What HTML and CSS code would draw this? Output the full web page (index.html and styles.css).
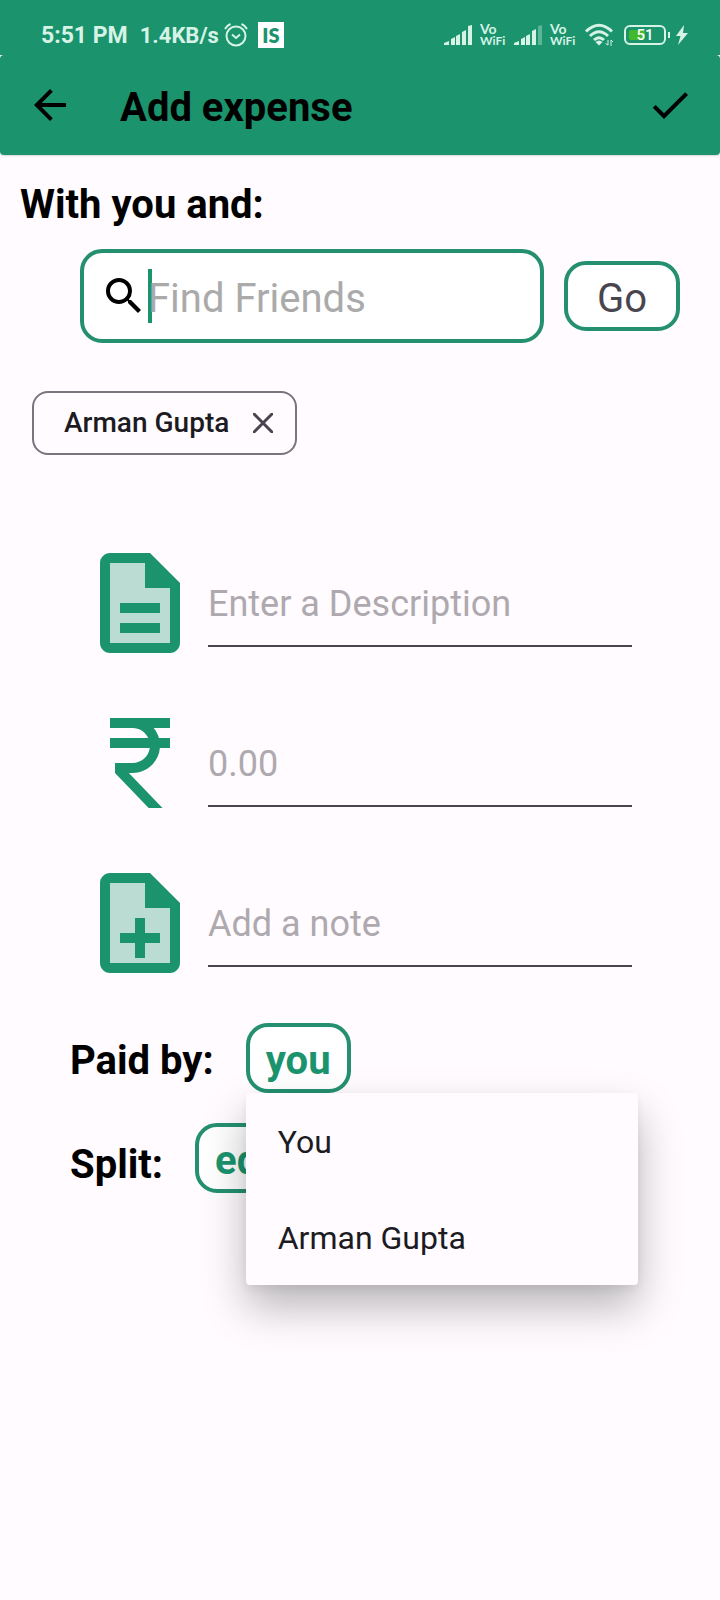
FILE: index.html
```html
<!DOCTYPE html>
<html lang="en">
<head>
<meta charset="utf-8">
<meta name="viewport" content="width=device-width, initial-scale=1">
<title>Add expense</title>
<link rel="stylesheet" href="styles.css">
</head>
<body>
<div class="status-bar">
  <div class="status-group">
    <span class="clock">5:51 PM</span>
    <span class="speed">1.4KB/s</span>
    <svg class="alarm" viewBox="0 0 24 24" width="24" height="24" aria-hidden="true"><circle cx="12" cy="13" r="9.5"/><path d="M1 6Q3 2.500 6.500 1M23 6Q21 2.500 17.500 1M8 11.500l4 3.500 4-3.500"/></svg>
    <span class="app-badge">IS</span>
  </div>
  <div class="status-group">
    <svg class="fill" viewBox="0 0 28 20" width="28" height="20" aria-hidden="true"><path d="M0 20v-2l5-2v4zM7 20v-6l4-2v8zM12 20v-9l4-2v11zM18 20V7l4-2v15zM24 20V1l4-1v20z"/></svg>
    <span class="vowifi"><span class="vo">Vo</span><span>WiFi</span></span>
    <svg class="fill" viewBox="0 0 28 20" width="28" height="20" aria-hidden="true"><path d="M0 20v-2l5-2v4zM7 20v-6l4-2v8zM12 20v-9l4-2v11zM18 20V6l4-2v16z"/><path opacity=".35" d="M24 20V1l4-1v20z"/></svg>
    <span class="vowifi"><span class="vo">Vo</span><span>WiFi</span></span>
    <svg class="wifi" viewBox="0 0 30 24" width="30" height="24" aria-hidden="true"><path d="M2 8.500Q15-4 28 8.500M6 13Q15 4.500 24 13M10 17Q15 12.500 20 17"/><path class="fill" d="M11.500 19q3.500-3 7 0L15 22.500z"/><path class="thin" d="M24 17v5M21.500 20.500L24 22M27 23v-6M27 17l2 2"/></svg>
    <span class="battery"><span class="battery-level"></span><span class="battery-text">51</span></span>
    <svg class="fill bolt" viewBox="0 0 12 20" width="12" height="20" aria-hidden="true"><path d="M8 0L0 11h4.500L2 20l10-12H7z"/></svg>
  </div>
</div>

<header class="app-bar">
  <button type="button" aria-label="Back"><svg viewBox="0 0 24 24" width="48" height="48"><path d="M20 11H7.830l5.590-5.590L12 4l-8 8 8 8 1.410-1.410L7.830 13H20z"/></svg></button>
  <h1>Add expense</h1>
  <button type="button" aria-label="Save"><svg viewBox="0 0 24 24" width="48" height="48"><path d="M9 16.170L4.830 12l-1.420 1.410L9 19 21 7l-1.410-1.410z"/></svg></button>
</header>

<main>
  <h2>With you and:</h2>
  <form class="search-row">
    <label class="search-box">
      <svg viewBox="0 0 24 24" width="48" height="48" aria-hidden="true"><path d="M15.500 14h-.79l-.28-.27A6.470 6.470 0 0 0 16 9.500 6.500 6.500 0 1 0 9.500 16c1.610 0 3.090-.59 4.230-1.570l.27.28v.79l5 4.990L20.490 19l-4.990-5zm-6 0C7.010 14 5 11.990 5 9.500S7.010 5 9.500 5 14 7.010 14 9.500 11.990 14 9.500 14z"/></svg>
      <span class="caret"></span>
      <input type="text" placeholder="Find Friends" aria-label="Find Friends">
    </label>
    <button class="outline-button go" type="button">Go</button>
  </form>

  <div class="chips">
    <div class="chip">Arman Gupta
      <button type="button" aria-label="Remove Arman Gupta"><svg viewBox="0 0 20 20" width="20" height="20"><path d="M0 0l20 20M20 0L0 20"/></svg></button>
    </div>
  </div>

  <div class="fields">
    <div class="field">
      <svg viewBox="0 0 24 24" width="120" height="120" aria-hidden="true"><path opacity=".3" d="M13 4H6v16h12V9h-5V4zm3 14H8v-2h8v2zm0-6v2H8v-2h8z"/><path d="M8 16h8v2H8zm0-4h8v2H8zm6-10H6c-1.100 0-2 .9-2 2v16c0 1.100.890 2 1.990 2H18c1.100 0 2-.9 2-2V8l-6-6zm4 18H6V4h7v5h5v11z"/></svg>
      <input type="text" placeholder="Enter a Description" aria-label="Description">
    </div>
    <div class="field">
      <svg viewBox="0 0 24 24" width="120" height="120" aria-hidden="true"><path d="M13.660 7c-.56-1.180-1.760-2-3.160-2H6V3h12v2h-3.260c.48.580.840 1.260 1.050 2H18v2h-2.020c-.25 2.800-2.610 5-5.480 5h-.73l6.730 7h-2.770L7 14v-2h3.500c1.760 0 3.220-1.300 3.460-3H6V7h7.660z"/></svg>
      <input type="text" inputmode="decimal" placeholder="0.00" aria-label="Amount">
    </div>
    <div class="field">
      <svg viewBox="0 0 24 24" width="120" height="120" aria-hidden="true"><path opacity=".3" d="M13 4H6v16h12V9h-5V4zm3 10v2h-3v3h-2v-3H8v-2h3v-3h2v3h3z"/><path d="M14 2H6c-1.100 0-2 .9-2 2v16c0 1.100.890 2 1.990 2H18c1.100 0 2-.9 2-2V8l-6-6zm4 18H6V4h7v5h5v11zm-7-1h2v-3h3v-2h-3v-3h-2v3H8v2h3z"/></svg>
      <input type="text" placeholder="Add a note" aria-label="Note">
    </div>
  </div>

  <div class="options">
    <div class="option">
      <span>Paid by:</span>
      <div class="menu-anchor">
        <button class="outline-button choice" type="button" aria-haspopup="menu" aria-expanded="true">you</button>
        <div class="menu" role="menu">
          <button type="button" role="menuitem">You</button>
          <button type="button" role="menuitem">Arman Gupta</button>
        </div>
      </div>
    </div>
    <div class="option option-split">
      <span>Split:</span>
      <button class="outline-button choice" type="button">equally</button>
    </div>
  </div>
</main>
</body>
</html>
```
FILE: styles.css
```css
:root {
  --green: #1b946e;
  --outline: #259070;
  --surface: #fffbff;
  --status: #d6f3e6;
}

* { box-sizing: border-box; }

body {
  margin: 0;
  min-height: 100vh;
  background: var(--surface);
  color: #000;
  font-family: Roboto, "Liberation Sans", sans-serif;
}

button, input { font: inherit; color: inherit; margin: 0; }
button { padding: 0; border: 0; background: none; cursor: pointer; }
svg { display: block; flex: none; }
h1, h2 { margin: 0; font-size: 40px; line-height: 48px; font-weight: 700; }

.status-bar {
  display: flex;
  justify-content: space-between;
  align-items: center;
  height: 55px;
  padding: 14px 32px 0 41px;
  background: var(--green);
  color: var(--status);
}
.status-group { display: flex; align-items: center; }
.clock, .speed { padding-top: 2px; font-size: 23px; line-height: 28px; font-weight: 700; }
.speed { margin-left: 12px; font-size: 22px; }
.alarm { margin-left: 5px; fill: none; stroke: var(--status); stroke-width: 2; }
.app-badge {
  width: 26px;
  margin-left: 10px;
  background: #fff;
  color: var(--green);
  font: 800 20px/26px Lato, sans-serif;
  text-align: center;
}
.fill { fill: var(--status); stroke: none; }
.vowifi { width: 26px; margin: 0 8px; font: 700 12px/12px Lato, sans-serif; }
.vowifi span { display: block; }
.vowifi .vo { font-size: 14px; }
.wifi { fill: none; stroke: var(--status); stroke-width: 3; }
.wifi .fill { fill: var(--status); stroke: none; }
.wifi .thin { stroke-width: 1; }
.battery {
  position: relative;
  width: 42px;
  height: 20px;
  margin-left: 10px;
  padding: 3px;
  border: 2px solid var(--status);
  border-radius: 6px;
}
.battery::after {
  content: "";
  position: absolute;
  top: 5px;
  right: -6px;
  width: 2px;
  height: 6px;
  background: var(--status);
}
.battery-level { display: block; width: 16px; height: 10px; border-radius: 2px; background: #43b82c; }
.battery-text { position: absolute; inset: 0; color: #fff; font-size: 15px; line-height: 16px; font-weight: 500; text-align: center; }
.bolt { margin-left: 10px; }

.app-bar {
  display: flex;
  align-items: center;
  height: 100px;
  padding: 0 26px;
  border-radius: 4px;
  background: var(--green);
  box-shadow: 0 1px 2px rgba(0, 0, 0, 0.15);
}
.app-bar h1 { flex: 1; padding: 6px 0 0 46px; }

main { padding: 26px 20px 40px; }

.search-row {
  display: flex;
  align-items: center;
  gap: 20px;
  margin: 20px 20px 0 60px;
}
.search-box {
  display: flex;
  align-items: center;
  flex: 1;
  min-width: 0;
  height: 94px;
  padding: 0 16px;
  border: 4px solid var(--outline);
  border-radius: 22px;
  background: #fff;
}
.search-box input {
  flex: 1;
  min-width: 0;
  padding: 6px 0 0;
  border: 0;
  outline: 0;
  background: none;
  font-size: 40px;
  line-height: 48px;
}
.search-box input::placeholder { color: #aaa; opacity: 1; }
.caret { width: 4px; height: 54px; margin-right: -4px; background: var(--green); }

.outline-button {
  height: 70px;
  border: 4px solid var(--outline);
  border-radius: 22px;
  background: #fff;
  font-size: 40px;
  line-height: 48px;
}
.go { padding: 5px 29px 0; color: #49454f; }

.chips { display: flex; margin: 48px 12px 0; }
.chip {
  display: flex;
  align-items: center;
  gap: 24px;
  height: 64px;
  padding: 0 22px 0 30px;
  border: 2px solid #79747e;
  border-radius: 16px;
  color: #1c1b1f;
  font-size: 28px;
  line-height: 32px;
  font-weight: 500;
}
.chip svg { fill: none; stroke: #49454f; stroke-width: 3; }

.fields {
  display: grid;
  grid-template-columns: minmax(0, 1fr);
  gap: 40px;
  margin: 88px 68px 0 60px;
}
.field { display: flex; align-items: flex-start; gap: 8px; }
.field svg { fill: var(--green); }
.field input {
  flex: 1;
  min-width: 0;
  height: 104px;
  padding: 20px 0 0;
  border: 0;
  border-bottom: 2px solid #49454f;
  border-radius: 0;
  outline: 0;
  background: none;
  font-size: 36px;
  line-height: 44px;
}
.field input::placeholder { color: #aea9ae; opacity: 1; }

.options { display: grid; gap: 30px; margin: 40px 50px 0; }
.option { display: flex; align-items: center; gap: 32px; font-size: 40px; line-height: 48px; font-weight: 700; }
.option > span { padding-top: 6px; }
.option-split > span { padding-top: 14px; }
.choice { padding: 5px 16px 0; color: var(--green); font-weight: 700; }
.menu-anchor { position: relative; }
.menu {
  position: absolute;
  top: 100%;
  left: 0;
  z-index: 1;
  width: 392px;
  border-radius: 4px;
  background: var(--surface);
  box-shadow: 0 22px 44px rgba(0, 0, 0, 0.28), 0 4px 10px rgba(0, 0, 0, 0.06);
}
.menu button {
  display: block;
  width: 100%;
  height: 96px;
  padding: 2px 32px 0;
  color: #1c1b1f;
  font-size: 32px;
  line-height: 40px;
  font-weight: 400;
  text-align: left;
}
```
